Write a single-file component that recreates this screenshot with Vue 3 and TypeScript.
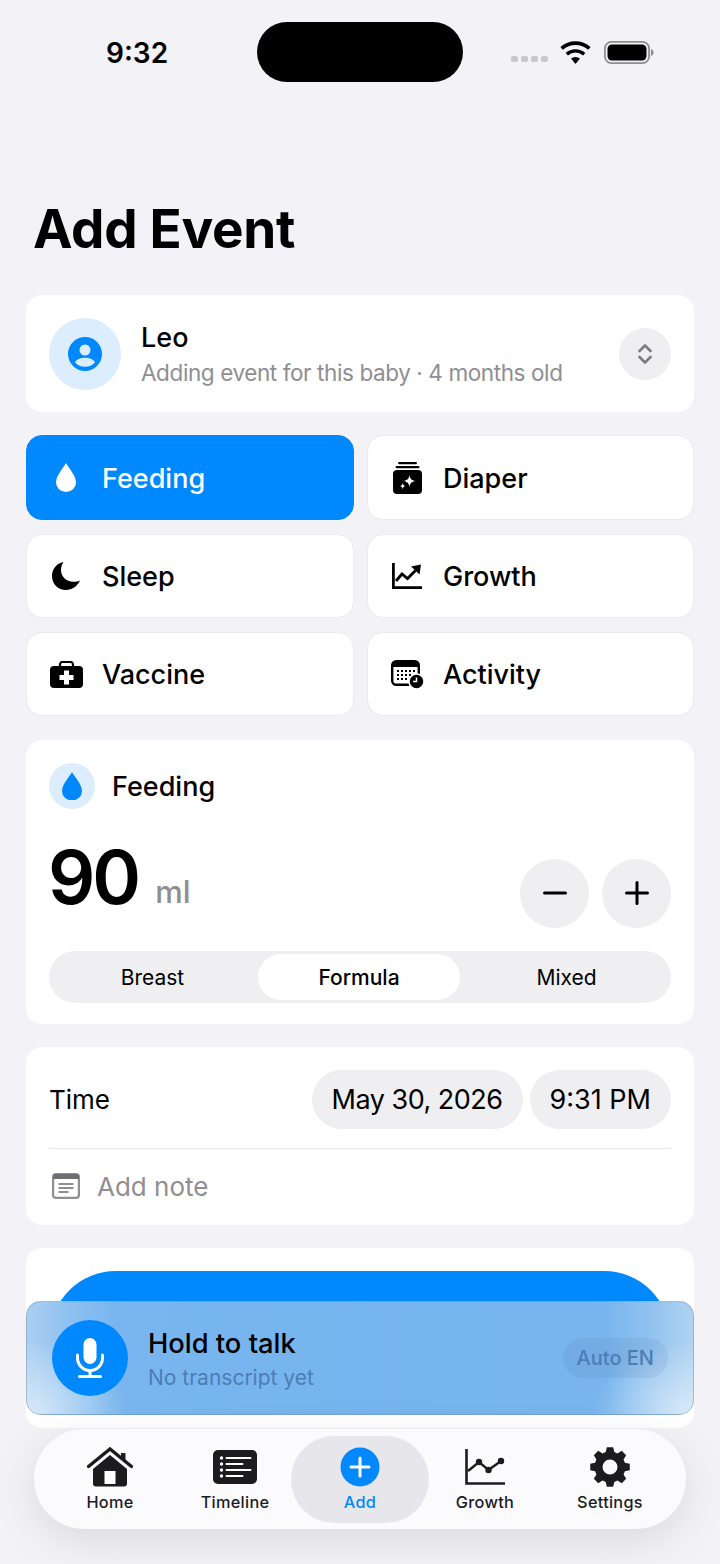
<template>
  <div class="page">
    <div class="status">
      <span class="clock">9:32</span>
      <div class="island"></div>
      <div class="signal"><i v-for="n in 4" :key="n"></i></div>
      <svg class="wifi" viewBox="0 0 31 23" width="31" height="23">
        <path d="M15.5 23 11 17.6a7 7 0 0 1 9 0Z" fill="#000" />
        <path d="M6.8 13.2a13 13 0 0 1 17.4 0" fill="none" stroke="#000" stroke-width="3.4" />
        <path d="M1.6 7.4a21 21 0 0 1 27.8 0" fill="none" stroke="#000" stroke-width="3.6" />
      </svg>
      <svg class="battery" viewBox="0 0 50 23" width="50" height="23">
        <rect x="0.9" y="0.9" width="44.2" height="21.2" rx="6.5" fill="none" stroke="#8e8e93" stroke-width="1.8" />
        <rect x="3.5" y="3.5" width="39" height="16" rx="4.5" fill="#000" />
        <path d="M47 8v7c1.6-.5 2.6-2 2.6-3.500S48.600 8.500 47 8Z" fill="#8e8e93" />
      </svg>
    </div>

    <h1 class="title">Add Event</h1>

    <section class="card baby">
      <div class="avatar">
        <svg viewBox="0 0 34 34" width="34" height="34">
          <circle cx="17" cy="17" r="17" fill="#0088ff" />
          <circle cx="17" cy="13" r="5.500" fill="#dcedfd" />
          <path d="M7 25.500c1.500-3.200 5-4.700 10-4.700s8.500 1.500 10 4.700c-2.500 2.700-6 4.300-10 4.300s-7.500-1.600-10-4.300Z" fill="#dcedfd" />
        </svg>
      </div>
      <div class="baby-text">
        <div class="baby-name">Leo</div>
        <div class="baby-sub">Adding event for this baby · 4 months old</div>
      </div>
      <button class="chevrons">
        <svg viewBox="0 0 14 22" width="14" height="22" fill="none" stroke="#7c7c80" stroke-width="2.600" stroke-linecap="round" stroke-linejoin="round">
          <path d="M1.500 8 7 2.500 12.500 8" />
          <path d="M1.500 14 7 19.500 12.500 14" />
        </svg>
      </button>
    </section>

    <div class="tiles">
      <button v-for="t in tiles" :key="t.key" class="tile" :class="{ active: t.key === 'feeding' }">
        <span class="tile-icon">
          <svg v-if="t.key === 'feeding'" viewBox="0 0 20 29" width="20" height="29">
            <path d="M10 0C8 4 0 12.500 0 19.500a10 9.500 0 0 0 20 0C20 12.500 12 4 10 0Z" fill="#fff" />
          </svg>
          <svg v-else-if="t.key === 'diaper'" viewBox="0 0 29 32" width="29" height="32">
            <rect x="5" y="0" width="19" height="2.200" rx="1.100" />
            <rect x="2.500" y="4" width="24" height="2.200" rx="1.100" />
            <rect x="0" y="8" width="29" height="24" rx="4" />
            <path d="M16.500 13c.7 4 1.900 5.300 6 6-4.100.7-5.300 2-6 6-.7-4-1.900-5.300-6-6 4.100-.7 5.300-2 6-6Z" fill="#fff" />
            <path d="M9.700 21c.4 2.200 1 2.800 3.100 3.100-2.100.4-2.700 1-3.100 3.100-.4-2.100-1-2.700-3.100-3.100 2.100-.3 2.700-.9 3.100-3.100Z" fill="#fff" />
          </svg>
          <svg v-else-if="t.key === 'sleep'" viewBox="0 0 28 28" width="28" height="28">
            <path d="M11.500 0C4.500 1.500 0 7 0 14c0 8 6 14 14 14 6 0 11-3.500 14-9.500-1.500.8-4 1.300-6.500 1.300C14 19.800 9 14.500 9 8c0-3 1-5.800 2.500-8Z" />
          </svg>
          <svg v-else-if="t.key === 'growth'" viewBox="0 0 30 26" width="30" height="26">
            <path d="M1.400 0v24.600H30" fill="none" stroke="#000" stroke-width="2.800" />
            <path d="M4 18l6-7 5.500 4.500 8-8" fill="none" stroke="#000" stroke-width="2.800" />
            <path d="M19 3.500l10-2-1.500 10Z" />
          </svg>
          <svg v-else-if="t.key === 'vaccine'" viewBox="0 0 33 27" width="33" height="27">
            <path d="M10 6V3.500A2.500 2.500 0 0 1 12.500 1h8A2.500 2.500 0 0 1 23 3.500V6" fill="none" stroke="#000" stroke-width="2.200" />
            <rect x="0" y="5" width="33" height="22" rx="4" />
            <path d="M14 9.500h5V14h4.500v5H19v4.500h-5V19H9.500v-5H14Z" fill="#fff" />
          </svg>
          <svg v-else viewBox="0 0 33 29" width="33" height="29">
            <rect x="1.200" y="1.200" width="26.600" height="23.600" rx="4" fill="#fff" stroke="#000" stroke-width="2.400" />
            <path d="M1 7V5a4 4 0 0 1 4-4h19a4 4 0 0 1 4 4v2Z" />
            <g fill="#000">
              <rect v-for="d in calendarDots" :key="d.id" :x="d.x" :y="d.y" width="2" height="2" />
            </g>
            <circle cx="25.500" cy="21.500" r="7.500" stroke="#fff" stroke-width="1.500" />
            <path d="M25.500 17.500v4h-3.500" fill="none" stroke="#fff" stroke-width="1.500" />
          </svg>
        </span>
        <span class="tile-label">{{ t.label }}</span>
      </button>
    </div>

    <section class="card feed">
      <div class="feed-head">
        <span class="feed-badge">
          <svg viewBox="0 0 20 28" width="20" height="28">
            <path d="M10 0C8 4 0 12 0 19a10 9.500 0 0 0 20 0C20 12 12 4 10 0Z" fill="#0088ff" />
          </svg>
        </span>
        <span class="feed-title">Feeding</span>
      </div>
      <div class="amount-row">
        <span class="amount">90</span>
        <span class="unit">ml</span>
        <div class="steppers">
          <button class="step">
            <svg viewBox="0 0 24 24" width="24" height="24"><path d="M1.500 12h21" stroke="#000" stroke-width="3" stroke-linecap="round" /></svg>
          </button>
          <button class="step">
            <svg viewBox="0 0 24 24" width="24" height="24"><path d="M1.500 12h21M12 1.500v21" stroke="#000" stroke-width="3" stroke-linecap="round" /></svg>
          </button>
        </div>
      </div>
      <div class="segments">
        <span v-for="s in segments" :key="s" class="segment" :class="{ on: s === 'Formula' }">{{ s }}</span>
      </div>
    </section>

    <section class="card time-card">
      <div class="time-row">
        <span class="time-label">Time</span>
        <span class="pill date">May 30, 2026</span>
        <span class="pill">9:31 PM</span>
      </div>
      <div class="note-row">
        <svg viewBox="0 0 28 26" width="28" height="26">
          <rect x="1.100" y="1.100" width="25.800" height="23.800" rx="3" fill="none" stroke="#8e8e93" stroke-width="2.200" />
          <path d="M1 6V3.500A2.500 2.500 0 0 1 3.500 1h21A2.500 2.500 0 0 1 27 3.500V6Z" fill="#6e6e73" />
          <path d="M6.500 11h15M6.500 15h15M6.500 19h10" stroke="#8e8e93" stroke-width="1.800" />
        </svg>
        <span class="note-text">Add note</span>
      </div>
    </section>

    <section class="card save">
      <div class="save-btn"></div>
    </section>

    <div class="voice">
      <span class="mic">
        <svg viewBox="0 0 28 40" width="28" height="40" fill="none" stroke="#fff" stroke-width="3" stroke-linecap="round">
          <rect x="7.500" y="0" width="13" height="26" rx="6.500" fill="#fff" stroke="none" />
          <path d="M1.500 17v3a12.500 12.500 0 0 0 25 0v-3" />
          <path d="M14 33v5M3.500 38.500h21" />
        </svg>
      </span>
      <div class="voice-text">
        <div class="voice-title">Hold to talk</div>
        <div class="voice-sub">No transcript yet</div>
      </div>
      <span class="auto">Auto EN</span>
    </div>

    <nav class="tabbar">
      <div v-for="n in nav" :key="n.key" class="tab" :class="{ current: n.key === 'add' }">
        <span class="tab-icon">
          <svg v-if="n.key === 'home'" viewBox="0 0 46 40" width="46" height="40">
            <path d="M1.500 19.500 23 2l21.500 17.500" fill="none" stroke="#1c1c1e" stroke-width="3.400" stroke-linecap="round" />
            <path d="M34 6h4.500v10L34 12Z" fill="#1c1c1e" />
            <path d="M6 22 23 8l17 14v14.500a3 3 0 0 1-3 3H9a3 3 0 0 1-3-3Z" fill="#1c1c1e" />
            <rect x="17.500" y="24" width="11" height="13" fill="#fff" />
          </svg>
          <svg v-else-if="n.key === 'timeline'" viewBox="0 0 44 34" width="44" height="34">
            <rect width="44" height="34" rx="5" fill="#1c1c1e" />
            <g fill="#fff">
              <circle cx="8.500" cy="8" r="1.700" /><circle cx="8.500" cy="14" r="1.700" /><circle cx="8.500" cy="20" r="1.700" /><circle cx="8.500" cy="26" r="1.700" />
            </g>
            <path d="M13.500 8h24M13.500 14h16M13.500 20h24M13.500 26h16" stroke="#fff" stroke-width="2" stroke-linecap="round" />
          </svg>
          <svg v-else-if="n.key === 'add'" viewBox="0 0 40 40" width="40" height="40">
            <circle cx="20" cy="20" r="19.500" fill="#0088ff" />
            <path d="M20 11v18M11 20h18" stroke="#fff" stroke-width="3" stroke-linecap="round" />
          </svg>
          <svg v-else-if="n.key === 'growth'" viewBox="0 0 40 36" width="40" height="36">
            <path d="M1.500 0v34.500H40" fill="none" stroke="#1c1c1e" stroke-width="2.600" />
            <path d="M3 22 14 13l9.500 8L36 12" fill="none" stroke="#1c1c1e" stroke-width="2.400" />
            <circle cx="14" cy="13" r="3.200" fill="#1c1c1e" />
            <circle cx="23.500" cy="21" r="3.200" fill="#1c1c1e" />
            <circle cx="36" cy="12" r="3.200" fill="#1c1c1e" />
          </svg>
          <svg v-else viewBox="0 0 40 40" width="40" height="40">
            <path :d="gearPath" fill="#1c1c1e" fill-rule="evenodd" />
          </svg>
        </span>
        <span class="tab-label">{{ n.label }}</span>
      </div>
    </nav>
  </div>
</template>

<script setup lang="ts">
const tiles = [
  { key: 'feeding', label: 'Feeding' },
  { key: 'diaper', label: 'Diaper' },
  { key: 'sleep', label: 'Sleep' },
  { key: 'growth', label: 'Growth' },
  { key: 'vaccine', label: 'Vaccine' },
  { key: 'activity', label: 'Activity' },
]

const segments = ['Breast', 'Formula', 'Mixed']

const nav = [
  { key: 'home', label: 'Home' },
  { key: 'timeline', label: 'Timeline' },
  { key: 'add', label: 'Add' },
  { key: 'growth', label: 'Growth' },
  { key: 'settings', label: 'Settings' },
]

// little grid of days on the activity calendar
const calendarDots = Array.from({ length: 14 }, (_, i) => ({
  id: i,
  x: 6 + (i % 5) * 4,
  y: 10 + Math.floor(i / 5) * 4,
}))

function buildGear(teeth: number, outer: number, inner: number, hole: number): string {
  const c = 20
  const step = (Math.PI * 2) / teeth
  const pts: string[] = []
  for (let i = 0; i < teeth; i++) {
    const a = i * step - Math.PI / 2
    const at = (r: number, o: number) =>
      `${(c + r * Math.cos(a + o)).toFixed(2)} ${(c + r * Math.sin(a + o)).toFixed(2)}`
    pts.push(at(inner, -step * 0.36), at(outer, -step * 0.2), at(outer, step * 0.2), at(inner, step * 0.36))
  }
  return `M${pts.join('L')}Z M${c + hole} ${c}a${hole} ${hole} 0 1 0 ${-hole * 2} 0a${hole} ${hole} 0 1 0 ${hole * 2} 0Z`
}

const gearPath = buildGear(8, 20, 15.5, 7.5)
</script>

<style>
html,
body {
  margin: 0;
  height: 100%;
  overflow: hidden;
  background: #f2f2f7;
}
</style>

<style scoped>
.page {
  position: relative;
  width: 720px;
  height: 1564px;
  overflow: hidden;
  padding: 0 26px;
  box-sizing: border-box;
  background: #f2f2f7;
  font-family: Inter, "Liberation Sans", sans-serif;
  color: #000;
}
.status {
  display: flex;
  align-items: center;
  height: 60px;
  margin: 0 -26px;
  padding: 22px 0 0 106px;
}
.clock {
  width: 151px;
  padding-top: 2px;
  font-size: 28px;
  font-weight: 600;
}
.island {
  width: 206px;
  height: 60px;
  border-radius: 30px;
  background: #000;
}
.signal {
  display: flex;
  gap: 3px;
  margin: 14px 0 0 48px;
}
.signal i {
  width: 7px;
  height: 6px;
  border-radius: 2px;
  background: #c7c7cc;
}
.wifi {
  margin-left: 12px;
}
.battery {
  margin-left: 13px;
}
.title {
  margin: 116px 0 0 7px;
  font-size: 53px;
  line-height: 63px;
  font-weight: 700;
  letter-spacing: -0.3px;
}
.card {
  background: #fff;
  border-radius: 16px;
}
.baby {
  display: flex;
  align-items: center;
  height: 117px;
  margin-top: 34px;
  padding: 0 23px;
  box-sizing: border-box;
}
.avatar {
  display: flex;
  align-items: center;
  justify-content: center;
  width: 72px;
  height: 72px;
  border-radius: 50%;
  background: #dcedfd;
}
.baby-text {
  flex: 1;
  margin-left: 20px;
  padding-top: 3px;
}
.baby-name {
  font-size: 27px;
  line-height: 36px;
  font-weight: 500;
}
.baby-sub {
  font-size: 22.500px;
  line-height: 34px;
  letter-spacing: -0.4px;
  color: #8e8e93;
}
.chevrons {
  display: flex;
  align-items: center;
  justify-content: center;
  width: 52px;
  height: 52px;
  padding: 0;
  border: 0;
  border-radius: 50%;
  background: #efeff1;
}
.tiles {
  display: grid;
  grid-template-columns: 328px 327px;
  grid-template-rows: 85px 84px 84px;
  column-gap: 13px;
  row-gap: 14px;
  margin-top: 23px;
}
.tile {
  display: flex;
  align-items: center;
  gap: 16px;
  padding: 0 0 0 19px;
  border: 1px solid #ebebef;
  border-radius: 16px;
  background: #fff;
  color: #000;
  font-family: inherit;
  text-align: left;
}
.tile.active {
  border-color: #0088ff;
  background: #0088ff;
  color: #fff;
}
.tile-icon {
  display: flex;
  align-items: center;
  justify-content: center;
  width: 40px;
  height: 40px;
}
.tile-label {
  padding-top: 1px;
  font-size: 27px;
  font-weight: 500;
}
.feed {
  height: 284px;
  margin-top: 24px;
  padding: 23px 23px 0;
  box-sizing: border-box;
}
.feed-head {
  display: flex;
  align-items: center;
  gap: 17px;
}
.feed-badge {
  display: flex;
  align-items: center;
  justify-content: center;
  width: 46px;
  height: 46px;
  border-radius: 50%;
  background: #dcedfd;
}
.feed-title {
  font-size: 27px;
  font-weight: 500;
}
.amount-row {
  display: flex;
  align-items: center;
  margin-top: 28px;
  height: 86px;
}
.amount {
  margin: -6px 0 0 -1px;
  font-size: 74px;
  line-height: 86px;
  font-weight: 600;
  letter-spacing: -3px;
}
.unit {
  margin: 22px 0 0 17px;
  font-size: 31px;
  font-weight: 500;
  color: #8e8e93;
}
.steppers {
  display: flex;
  gap: 13px;
  margin: 26px 0 0 auto;
}
.step {
  display: flex;
  align-items: center;
  justify-content: center;
  width: 69px;
  height: 69px;
  padding: 0;
  border: 0;
  border-radius: 50%;
  background: #efeff1;
}
.segments {
  display: grid;
  grid-template-columns: 203px 202px 205px;
  gap: 3px;
  height: 52px;
  margin-top: 28px;
  padding: 3px;
  box-sizing: border-box;
  border-radius: 26px;
  background: #efeff1;
}
.segment {
  display: flex;
  align-items: center;
  justify-content: center;
  border-radius: 23px;
  font-size: 21px;
}
.segment:first-child {
  padding-right: 2px;
}
.segment:last-child {
  padding-left: 2px;
}
.segment.on {
  background: #fff;
  font-weight: 500;
}
.time-card {
  height: 178px;
  margin-top: 23px;
  padding: 23px 23px 0;
  box-sizing: border-box;
}
.time-row {
  display: flex;
  align-items: center;
  gap: 7px;
  height: 79px;
  padding: 0 0 20px;
  box-sizing: border-box;
  border-bottom: 1px solid #e5e5ea;
}
.time-label {
  margin-right: auto;
  font-size: 26px;
}
.pill {
  display: flex;
  align-items: center;
  height: 59px;
  padding: 0 20px;
  border-radius: 30px;
  background: #efeff1;
  font-size: 27px;
}
.pill.date {
  letter-spacing: -0.5px;
}
.note-row {
  display: flex;
  align-items: center;
  gap: 17px;
  height: 74px;
  padding-left: 3px;
}
.note-text {
  font-size: 26px;
  color: #8e8e93;
}
.save {
  height: 180px;
  margin-top: 23px;
  padding: 23px 24px;
  box-sizing: border-box;
}
.save-btn {
  height: 133px;
  border-radius: 66px;
  background: #0088ff;
}
/* frosted bar over the save button, gradient stands in for the blur */
.voice {
  position: absolute;
  left: 26px;
  top: 1301px;
  display: flex;
  align-items: center;
  width: 668px;
  height: 114px;
  padding: 0 25px;
  box-sizing: border-box;
  border: 1px solid rgba(110, 140, 170, 0.45);
  border-radius: 15px;
  background:
    radial-gradient(100px 75px at 0% 100%, rgba(228, 240, 250, 0.8), rgba(228, 240, 250, 0)),
    radial-gradient(100px 75px at 100% 100%, rgba(228, 240, 250, 0.8), rgba(228, 240, 250, 0)),
    linear-gradient(90deg, #abcff1 0, #8fc1f0 6%, #79b6ef 13%, #76b4ef 50%, #78b5ee 87%, #93c3f0 94%, #b0d2f2 100%);
}
.mic {
  display: flex;
  align-items: center;
  justify-content: center;
  width: 76px;
  height: 76px;
  border-radius: 50%;
  background: #0088ff;
}
.voice-text {
  flex: 1;
  margin-left: 20px;
  padding-top: 4px;
}
.voice-title {
  font-size: 27.300px;
  line-height: 34px;
  font-weight: 500;
}
.voice-sub {
  margin-top: 2px;
  font-size: 21px;
  line-height: 30px;
  color: #4c7db5;
}
.auto {
  display: flex;
  align-items: center;
  height: 40px;
  padding: 0 14px;
  border-radius: 20px;
  background: rgba(70, 100, 140, 0.1);
  font-size: 20px;
  font-weight: 500;
  color: #4c7db5;
}
.tabbar {
  position: absolute;
  left: 34px;
  top: 1429px;
  display: grid;
  grid-template-columns: repeat(5, 125px);
  justify-content: center;
  align-items: center;
  width: 652px;
  height: 100px;
  border-radius: 50px;
  background: #fbfbfe;
  box-shadow: 0 12px 44px rgba(0, 0, 0, 0.1);
}
.tab {
  display: flex;
  flex-direction: column;
  align-items: center;
  height: 87px;
  padding-top: 10px;
  box-sizing: border-box;
}
.tab.current {
  margin: 0 -6.500px;
  border-radius: 44px;
  background: #e6e6eb;
}
.tab-icon {
  display: flex;
  align-items: center;
  justify-content: center;
  height: 42px;
}
.tab-label {
  margin-top: 3px;
  font-size: 16.300px;
  line-height: 22px;
  font-weight: 500;
  color: #1c1c1e;
  letter-spacing: 0.3px;
}
.current .tab-label {
  color: #0088ff;
}
</style>
